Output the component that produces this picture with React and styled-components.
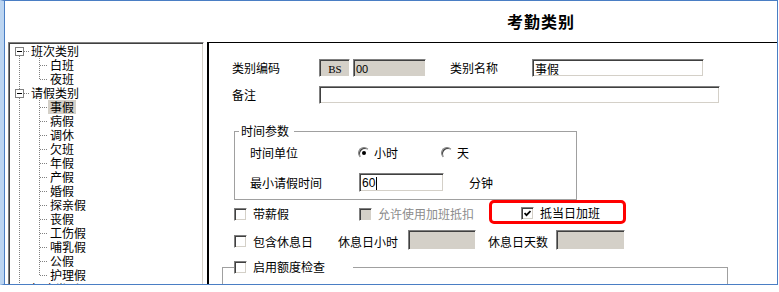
import React from 'react';
import styled, { createGlobalStyle } from 'styled-components';

const GlobalStyle = createGlobalStyle`
  html, body {
    margin: 0;
    padding: 0;
    background: #fff;
  }
  body {
    font-family: "Noto Sans CJK SC", "Noto Sans", sans-serif;
    font-size: 12px;
    color: #000;
  }
`;

const Frame = styled.div`
  width: 778px;
  height: 285px;
  box-sizing: border-box;
  border: 1px solid #4a7ec4;
  border-left: 4px solid #bcd5f1;
  display: flex;
`;

const Inner = styled.div`
  flex: 1;
  border-left: 1px solid #4a7ec4;
  display: flex;
  flex-direction: column;
  min-width: 0;
`;

const Header = styled.div`
  height: 41px;
  flex: none;
  padding-left: 502px;
  line-height: 41px;
  font-size: 16px;
  font-weight: 700;
  letter-spacing: 1px;
`;

const Body = styled.div`
  flex: 1;
  display: flex;
  overflow: hidden;
`;

const TreePanel = styled.div`
  flex: none;
  width: 196px;
  height: 320px;
  margin-left: 3px;
  box-sizing: border-box;
  border: 1px solid;
  border-color: #808080 #fff #fff #808080;
  box-shadow: inset 1px 1px #404040, inset -1px -1px #d4d0c8;
  padding: 1px;
`;

const TreeRow = styled.div`
  display: flex;
  align-items: center;
  height: 14px;
`;

const TreeLabel = styled.span`
  padding: 0 2px;
  height: 14px;
  line-height: 14px;
  white-space: nowrap;
  background: ${p => (p.$selected ? '#d4d0c8' : 'transparent')};
`;

const Gutter = styled.svg`
  display: block;
  flex: none;
`;

const dot = { stroke: '#808080', strokeWidth: 1, strokeDasharray: '1 1' };

const RootGutter = ({ first, last, open }) => (
  <Gutter width="19" height="14">
    {!first && <line x1="9.5" y1="0" x2="9.5" y2="3" style={dot} />}
    {!last && <line x1="9.5" y1="12" x2="9.5" y2="14" style={dot} />}
    <line x1="14" y1="7.5" x2="19" y2="7.5" style={dot} />
    <rect x="5.5" y="3.5" width="8" height="8" fill="#fff" stroke="#808080" />
    <line x1="7" y1="7.5" x2="12" y2="7.5" stroke="#000" />
    {!open && <line x1="9.5" y1="5" x2="9.5" y2="10" stroke="#000" />}
  </Gutter>
);

const PipeGutter = ({ show }) => (
  <Gutter width="19" height="14">
    {show && <line x1="9.5" y1="0" x2="9.5" y2="14" style={dot} />}
  </Gutter>
);

const BranchGutter = ({ last }) => (
  <Gutter width="19" height="14">
    <line x1="10.5" y1="0" x2="10.5" y2={last ? 8 : 14} style={dot} />
    <line x1="11" y1="7.5" x2="19" y2="7.5" style={dot} />
  </Gutter>
);

const FormPanel = styled.div`
  flex: 1;
  margin-left: 3px;
  border-left: 2px solid #000;
  border-top: 1px solid #000;
  display: flex;
  flex-direction: column;
  min-width: 0;
`;

const FieldRow = styled.div`
  display: flex;
  align-items: center;
  flex: none;
  height: ${p => p.$h || 18}px;
  margin: ${p => p.$mt || 0}px 0 0 ${p => p.$ml || 0}px;
`;

const Label = styled.span`
  flex: none;
  width: ${p => (p.$w ? `${p.$w}px` : 'auto')};
  margin-left: ${p => p.$ml || 0}px;
  margin-top: ${p => p.$mt || 0}px;
  line-height: 14px;
  white-space: nowrap;
  color: ${p => (p.$disabled ? '#8c8c8c' : '#000')};
`;

const TextBox = styled.div`
  flex: none;
  box-sizing: border-box;
  width: ${p => p.$w}px;
  height: ${p => p.$h || 18}px;
  margin-left: ${p => p.$ml || 0}px;
  border: 1px solid;
  border-color: #808080 #fff #fff #808080;
  box-shadow: inset 1px 1px #404040, inset -1px -1px #d4d0c8;
  background: ${p => (p.$readonly ? '#d4d0c8' : '#fff')};
  padding: 1px 1px 0 2px;
  display: flex;
  align-items: center;
  justify-content: ${p => (p.$center ? 'center' : 'flex-start')};
  font-family: ${p => p.$font || 'inherit'};
  font-size: ${p => p.$fs || 12}px;
  white-space: nowrap;
`;

const Caret = styled.span`
  display: inline-block;
  width: 1px;
  height: 13px;
  margin-left: 1px;
  background: #000;
`;

const Group = styled.fieldset`
  flex: none;
  box-sizing: border-box;
  width: ${p => p.$w}px;
  height: ${p => (p.$h ? `${p.$h}px` : 'auto')};
  margin: ${p => p.$mt || 0}px 0 0 ${p => p.$ml || 0}px;
  padding: 0 0 ${p => p.$pb || 0}px 0;
  border: 1px solid #a0a0a0;
  min-width: 0;
`;

const Legend = styled.legend`
  margin-left: ${p => p.$ml || 0}px;
  padding: 0 ${p => p.$pr || 0}px 0 ${p => p.$pl || 0}px;
  line-height: 14px;
  height: 14px;
  font-size: 12px;
`;

const Option = styled.span`
  flex: none;
  display: flex;
  align-items: center;
  width: ${p => (p.$w ? `${p.$w}px` : 'auto')};
  margin-top: ${p => p.$mt || 0}px;
  gap: ${p => p.$gap || 6}px;
  white-space: nowrap;
  line-height: 14px;
  color: ${p => (p.$disabled ? '#8c8c8c' : '#000')};
`;

const CheckBox = styled.span`
  flex: none;
  width: 13px;
  height: 13px;
  box-sizing: border-box;
  border: 1px solid;
  border-color: #808080 #fff #fff #808080;
  box-shadow: inset 1px 1px #404040, inset -1px -1px #d4d0c8;
  background: ${p => (p.$disabled ? '#d4d0c8' : '#fff')};
  display: flex;
  align-items: center;
  justify-content: center;
`;

const RadioDot = styled.span`
  flex: none;
  width: 12px;
  height: 12px;
  box-sizing: border-box;
  border-radius: 50%;
  border: 1px solid;
  border-color: #808080 #fff #fff #808080;
  box-shadow: inset 1px 1px #404040;
  background: #fff;
  display: flex;
  align-items: center;
  justify-content: center;
  &::after {
    content: '';
    width: 4px;
    height: 4px;
    border-radius: 50%;
    background: ${p => (p.$on ? '#000' : 'transparent')};
  }
`;

const Highlight = styled.div`
  flex: none;
  box-sizing: border-box;
  width: 137px;
  height: 24px;
  border: 3px solid #ff0000;
  border-radius: 5px;
  padding: 2px 0 0 29px;
  display: flex;
  align-items: center;
`;

const Check = ({ checked, disabled, children, w, mt }) => (
  <Option $w={w} $mt={mt} $disabled={disabled}>
    <CheckBox $disabled={disabled}>
      {checked && (
        <svg width="7" height="7" viewBox="0 0 7 7">
          <polyline points="0.5,3 2.5,5.2 6.5,1" fill="none" stroke="#000" strokeWidth="1.8" />
        </svg>
      )}
    </CheckBox>
    {children}
  </Option>
);

const tree = [
  { label: '班次类别', children: ['白班', '夜班'] },
  {
    label: '请假类别',
    children: ['事假', '病假', '调休', '欠班', '年假', '产假', '婚假', '探亲假', '丧假', '工伤假', '哺乳假', '公假', '护理假'],
  },
  { label: '加班类别', children: [], closed: true },
];

const App = () => {
  const rows = [];
  tree.forEach((node, i) => {
    const lastRoot = i === tree.length - 1;
    rows.push(
      <TreeRow key={node.label}>
        <RootGutter first={i === 0} last={lastRoot} open={!node.closed} />
        <TreeLabel>{node.label}</TreeLabel>
      </TreeRow>
    );
    node.children.forEach((c, j) => {
      rows.push(
        <TreeRow key={node.label + c}>
          <PipeGutter show={!lastRoot} />
          <BranchGutter last={j === node.children.length - 1} />
          <TreeLabel $selected={c === '事假'}>{c}</TreeLabel>
        </TreeRow>
      );
    });
  });

  return (
    <>
      <GlobalStyle />
      <Frame>
        <Inner>
          <Header>考勤类别</Header>
          <Body>
            <TreePanel>{rows}</TreePanel>
            <FormPanel>
              <FieldRow $mt={16} $ml={23}>
                <Label $w={87}>类别编码</Label>
                <TextBox $w={31} $readonly $center $font='"Liberation Serif", serif' $fs={11}>BS</TextBox>
                <TextBox $w={73} $ml={3} $readonly $font='"Liberation Sans", sans-serif' $fs={11}>00</TextBox>
                <Label $w={82} $ml={24}>类别名称</Label>
                <TextBox $w={172}>事假</TextBox>
              </FieldRow>
              <FieldRow $mt={9} $ml={23}>
                <Label $w={87}>备注</Label>
                <TextBox $w={401} />
              </FieldRow>

              <Group $mt={20} $ml={25} $w={343} $pb={7}>
                <Legend $ml={4} $pl={2} $pr={5}>时间参数</Legend>
                <FieldRow $mt={6} $ml={15}>
                  <Label $w={108}>时间单位</Label>
                  <Option $w={83} $gap={4}>
                    <RadioDot $on />
                    小时
                  </Option>
                  <Option $gap={4}>
                    <RadioDot />
                    天
                  </Option>
                </FieldRow>
                <FieldRow $mt={11} $ml={15} $h={19}>
                  <Label $w={109}>最小请假时间</Label>
                  <TextBox $w={85} $h={19} $font='"Liberation Sans", sans-serif'>
                    60
                    <Caret />
                  </TextBox>
                  <Label $ml={25}>分钟</Label>
                </FieldRow>
              </Group>

              <FieldRow $ml={25} $h={24}>
                <Check w={125} mt={4}>带薪假</Check>
                <Check w={130} mt={4} disabled>允许使用加班抵扣</Check>
                <Highlight>
                  <Check checked>抵当日加班</Check>
                </Highlight>
              </FieldRow>

              <FieldRow $mt={6} $ml={25} $h={20}>
                <Check w={104} mt={3}>包含休息日</Check>
                <Label $w={70} $mt={3}>休息日小时</Label>
                <TextBox $w={68} $h={20} $readonly />
                <Label $w={68} $ml={12} $mt={3}>休息日天数</Label>
                <TextBox $w={69} $h={20} $readonly />
              </FieldRow>

              <Group $mt={10} $ml={13} $w={506} $h={60}>
                <Legend $ml={11} $pr={28}>
                  <Check>启用额度检查</Check>
                </Legend>
              </Group>
            </FormPanel>
          </Body>
        </Inner>
      </Frame>
    </>
  );
};

export default App;
